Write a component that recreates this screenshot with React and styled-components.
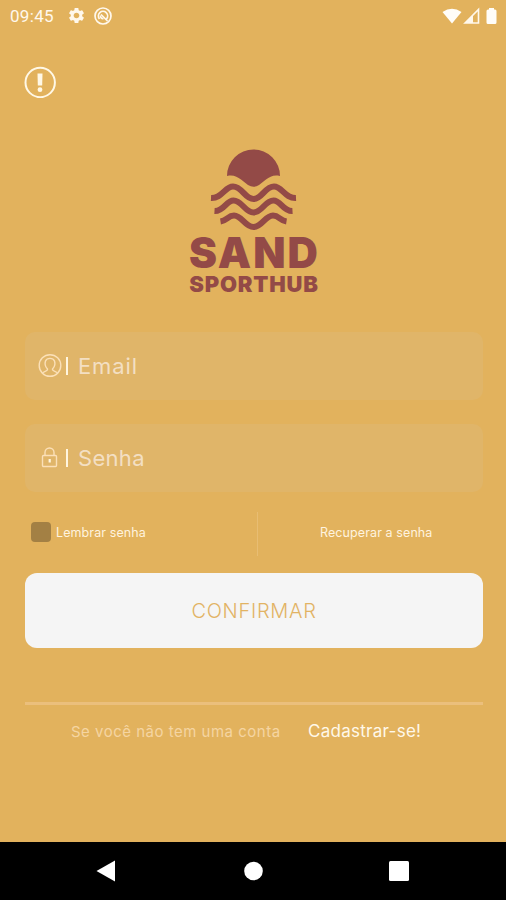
import React from "react";
import styled, { createGlobalStyle } from "styled-components";
import { MdSettings } from "react-icons/md";

const GlobalStyle = createGlobalStyle`
    * {
        box-sizing: border-box;
    }
    body {
        margin: 0;
        background-color: #E2B25D;
        font-family: Inter, "Open Sans", sans-serif;
    }
`;

const Screen = styled.div`
    display: flex;
    flex-direction: column;
    height: 900px;
    background-color: #E2B25D;
    white-space: nowrap;
`;

const StatusBar = styled.header`
    display: flex;
    align-items: center;
    height: 32px;
    padding: 0 6px 0 10px;
    color: #FFF8EC;
`;

const Clock = styled.span`
    width: 57px;
    font-family: Roboto, sans-serif;
    font-size: 17px;
    letter-spacing: 0.3px;
`;

const StatusIcons = styled.div`
    display: flex;
    align-items: center;
    gap: ${({ $gap }) => $gap}px;
    margin-left: ${({ $end }) => ($end ? "auto" : "0")};
    margin-top: -1px;

    svg {
        display: block;
    }
`;

const Content = styled.main`
    display: flex;
    flex: 1;
    flex-direction: column;
    padding: 34px 23px 0 25px;
`;

const InfoButton = styled.button`
    width: 32px;
    height: 32px;
    margin-left: -1px;
    padding: 0;
    border: 0;
    background: none;

    svg {
        display: block;
    }
`;

const Logo = styled.div`
    display: flex;
    flex-direction: column;
    align-items: center;
    height: 160px;
    margin: 42px 0 32px;
    color: #934A47;

    svg {
        display: block;
    }
`;

const LogoTitle = styled.span`
    height: 34px;
    margin: 4px 0 0 1px;
    font-size: 42px;
    font-weight: 900;
    line-height: 34px;
    letter-spacing: 2px;
`;

const LogoSubtitle = styled.span`
    height: 24px;
    margin-top: 2px;
    font-size: 22px;
    font-weight: 900;
    line-height: 24px;
    letter-spacing: 0.8px;
`;

const Field = styled.label`
    display: flex;
    align-items: center;
    height: 68px;
    margin-bottom: 24px;
    padding-left: 13px;
    border-radius: 10px;
    background-color: #E0B569;
    color: #F3DFC3;
    font-size: 22px;
    letter-spacing: ${({ $spacing }) => $spacing}px;

    svg {
        display: block;
        width: 25px;
        flex: none;
    }
`;

const Caret = styled.span`
    width: 2px;
    height: 18px;
    margin: 0 10px 0 3px;
    background-color: #FFF5DF;
`;

const Options = styled.div`
    display: grid;
    grid-template-columns: 232px 1fr;
    height: 44px;
    margin-top: -4px;
    color: #FFF3DF;
    font-size: 12.5px;
`;

const Remember = styled.label`
    display: flex;
    align-items: center;
    gap: 5px;
    padding: 0 0 4px 6px;
    letter-spacing: 0.1px;
`;

const Checkbox = styled.span`
    width: 20px;
    height: 20px;
    border-radius: 4px;
    background-color: #A38044;
`;

const Recover = styled.a`
    display: flex;
    align-items: center;
    padding: 0 0 3px 62px;
    border-left: 1px solid #E8BD73;
    letter-spacing: 0.1px;
`;

const ConfirmButton = styled.button`
    height: 75px;
    margin-top: 17px;
    border: 0;
    border-radius: 12px;
    background-color: #F5F5F5;
    color: #E2B364;
    font-family: inherit;
    font-size: 20px;
    font-weight: 300;
    letter-spacing: 0.7px;
`;

const Footer = styled.footer`
    display: flex;
    align-items: baseline;
    margin-top: 54px;
    padding: 16px 0 0 46px;
    border-top: 3px solid #EBBF7C;
`;

const Question = styled.span`
    width: 237px;
    color: #F5D5A2;
    font-size: 15px;
    letter-spacing: 0.5px;
`;

const SignUp = styled.a`
    color: #FFF8E9;
    font-size: 17px;
    letter-spacing: 0.27px;
`;

const NavBar = styled.nav`
    display: flex;
    justify-content: space-between;
    align-items: center;
    height: 58px;
    padding: 0 96px;
    background-color: #000;
`;

function StatusSymbols() {
    return (
        <StatusIcons $end $gap={1}>
            <svg width="20" height="18" viewBox="0 0 20 18" fill="#FFFDF8">
                <path d="M.5 5Q10-1.500 19.500 5L10 16.500Z" />
            </svg>
            <svg width="18" height="18" viewBox="0 0 18 18">
                <path d="M2 16L15.500 2.500V16Z" fill="none" stroke="#FFF8EC" strokeWidth="1.600" />
                <path d="M2 16L10 8V16Z" fill="#FFF8EC" />
            </svg>
            <svg width="18" height="18" viewBox="0 0 18 18" fill="#FFFDF8">
                <path d="M7 1h5v1.500h1q1.500 0 1.500 1.500v11.500q0 1.500-1.500 1.500H6q-1.500 0-1.500-1.500v-11.500Q4.500 2.500 6 2.500h1Z" />
            </svg>
        </StatusIcons>
    )
}

function SandLogo() {
    return (
        <Logo>
            <svg width="150" height="92" viewBox="0 0 150 92">
                <g transform="translate(1 .5)">
                    <path d="M47 35.500A26.500 26.500 0 1 1 100 35.500C94 34 90 36 86 39L79 44.500Q73.500 48 68 44.500L61 39C57 36 53 34 47 35.500Z" fill="currentColor" />
                    <g fill="none" stroke="currentColor" strokeWidth="6">
                        <path d="M31 57.500C42 58 45 46 53 46C62 46 65 58.500 73.500 58.500C82 58.500 85 46 94 46C102 46 105 58 116 57.500" />
                        <path d="M34.500 70.500C44 71 46 60 53.500 60C62 60 65 72 73.500 72C82 72 85 60 93.500 60C101 60 103 71 112.500 70.500" />
                        <path d="M40.500 81C47 80 48 75 54 75C62 75 65 86.500 73.500 86.500C82 86.500 85 75 93 75C99 75 100 80 106.500 81" />
                    </g>
                </g>
            </svg>
            <LogoTitle>SAND</LogoTitle>
            <LogoSubtitle>SPORTHUB</LogoSubtitle>
        </Logo>
    )
}

function App() {
    return (
        <Screen>
            <GlobalStyle />
            <StatusBar>
                <Clock>09:45</Clock>
                <StatusIcons $gap={8}>
                    <MdSettings size={19} />
                    <svg width="20" height="20" viewBox="0 0 20 20" fill="none" stroke="currentColor" strokeWidth="1.700">
                        <circle cx="9" cy="10" r="8" />
                        <path d="M5.500 13A4.600 4.600 0 1 1 12.500 13M7 8.500L13.500 15" />
                        <path d="M6.500 9.500A2.500 2.500 0 0 0 9.500 12.500" />
                    </svg>
                </StatusIcons>
                <StatusSymbols />
            </StatusBar>
            <Content>
                <InfoButton aria-label="Informações">
                    <svg width="32" height="32" viewBox="0 0 32 32">
                        <circle cx="16.200" cy="16.500" r="14.700" fill="none" stroke="#FFF8E6" strokeWidth="2" />
                        <path d="M13.500 7.500h5l-.3 12h-4.400Z" fill="#FFF8E6" />
                        <circle cx="16" cy="23.700" r="2.400" fill="#FFF8E6" />
                    </svg>
                </InfoButton>
                <SandLogo />
                <Field $spacing={0.9}>
                    <svg height="26" viewBox="0 0 25 26" fill="none" stroke="#FBE0B8" strokeWidth="1.400">
                        <circle cx="12" cy="12.500" r="10.800" />
                        <path d="M4.500 20C6 18 10 18.500 9.500 16C7 13.500 6.500 11 7.500 8C9 4.500 15 4.500 16.500 8C17.500 11 17 13.500 14.500 16C14 18.500 18 18 19.500 20" />
                    </svg>
                    <Caret />
                    Email
                </Field>
                <Field $spacing={0.3}>
                    <svg height="26" viewBox="0 0 25 26" fill="none" stroke="#FBE0B8" strokeWidth="1.400">
                        <rect x="4.500" y="10.500" width="14" height="11" rx="1" />
                        <path d="M7 10.500V7.500A4.500 4.500 0 0 1 16 7.500V10.500" />
                        <path d="M11.700 14V17.500" stroke="#FFF5DF" strokeWidth="2.200" />
                    </svg>
                    <Caret />
                    Senha
                </Field>
                <Options>
                    <Remember>
                        <Checkbox />
                        Lembrar senha
                    </Remember>
                    <Recover>Recuperar a senha</Recover>
                </Options>
                <ConfirmButton>CONFIRMAR</ConfirmButton>
                <Footer>
                    <Question>Se você não tem uma conta</Question>
                    <SignUp>Cadastrar-se!</SignUp>
                </Footer>
            </Content>
            <NavBar>
                <svg width="20" height="24" viewBox="0 0 20 24" fill="#fff">
                    <path d="M.5 12L19 1.500V22.500Z" />
                </svg>
                <svg width="22" height="20" viewBox="0 0 22 20" fill="#fff">
                    <circle cx="12.500" cy="10" r="9.300" />
                </svg>
                <svg width="22" height="22" viewBox="0 0 22 22" fill="#fff">
                    <rect x="1" y="1" width="20" height="20" rx="1.500" />
                </svg>
            </NavBar>
        </Screen>
    )
}

export default App;
